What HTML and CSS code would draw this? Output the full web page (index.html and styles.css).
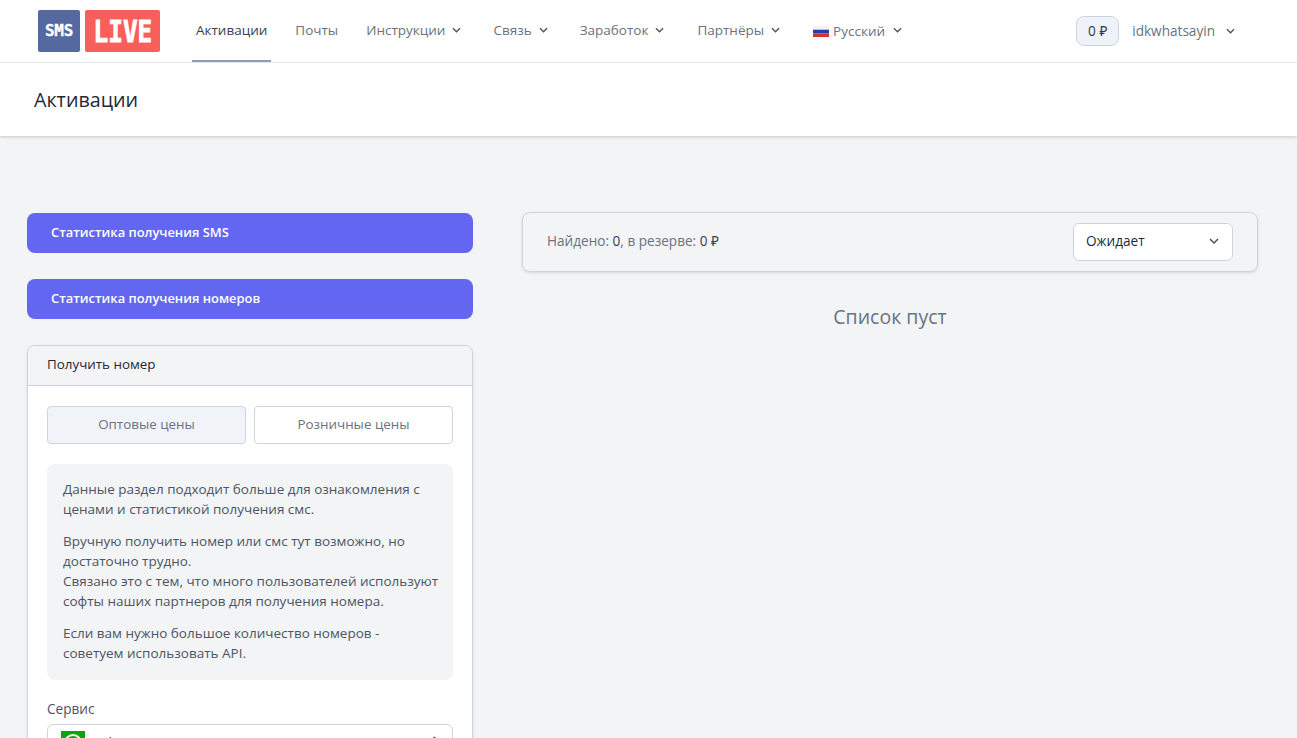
FILE: index.html
```html
<!DOCTYPE html>
<html lang="ru">

<head>
    <meta charset="UTF-8">
    <meta name="viewport" content="width=device-width, initial-scale=1.0">
    <title>SMS LIVE</title>
    <link rel="stylesheet" href="styles.css">
</head>

<body>
    <header class="topbar">
        <a class="logo" href="#">
            <span class="logo-sms"><span>SMS</span></span>
            <span class="logo-live"><span>LIVE</span></span>
        </a>
        <nav class="nav">
            <a class="nav-link plain active" href="#">Активации</a>
            <a class="nav-link plain" href="#">Почты</a>
            <a class="nav-link" href="#">Инструкции
                <svg class="chev" viewBox="0 0 10 6"><path d="M1 1l4 4 4-4"/></svg></a>
            <a class="nav-link" href="#">Связь
                <svg class="chev" viewBox="0 0 10 6"><path d="M1 1l4 4 4-4"/></svg></a>
            <a class="nav-link wide" href="#">Заработок
                <svg class="chev" viewBox="0 0 10 6"><path d="M1 1l4 4 4-4"/></svg></a>
            <a class="nav-link wide" href="#">Партнёры
                <svg class="chev" viewBox="0 0 10 6"><path d="M1 1l4 4 4-4"/></svg></a>
            <a class="nav-link lang" href="#">
                <svg class="flag" viewBox="0 0 16 11"><rect width="16" height="3.7" fill="#f4f4f6"/><rect y="3.7" width="16" height="3.6" fill="#1c3fb0"/><rect y="7.3" width="16" height="3.7" fill="#d9302c"/></svg>
                <span class="lang-name">Русский</span>
                <svg class="chev" viewBox="0 0 10 6"><path d="M1 1l4 4 4-4"/></svg></a>
        </nav>
        <div class="account">
            <span class="balance">0 ₽</span>
            <a class="user" href="#">idkwhatsayin
                <svg class="chev" viewBox="0 0 10 6"><path d="M1 1l4 4 4-4"/></svg></a>
        </div>
    </header>

    <div class="page-title">
        <h1>Активации</h1>
    </div>

    <main class="content">
        <aside class="side">
            <button class="stat-btn">Статистика получения SMS</button>
            <button class="stat-btn">Статистика получения номеров</button>

            <section class="card">
                <div class="card-head">Получить номер</div>
                <div class="card-body">
                    <div class="tabs">
                        <button class="tab selected">Оптовые цены</button>
                        <button class="tab">Розничные цены</button>
                    </div>
                    <div class="notice">
                        <p>Данные раздел подходит больше для ознакомления с ценами и статистикой получения смс.</p>
                        <p>Вручную получить номер или смс тут возможно, но достаточно трудно.<br>Связано это с тем, что много пользователей используют софты наших партнеров для получения номера.</p>
                        <p>Если вам нужно большое количество номеров - советуем использовать API.</p>
                    </div>
                    <label class="field-label">Сервис</label>
                    <div class="service-select">
                        <span class="service-icon">
                            <svg viewBox="0 0 24 24"><circle cx="12" cy="12" r="8" fill="none" stroke="#fff" stroke-width="2"/></svg>
                        </span>
                        <span class="service-name">Whatsapp</span>
                        <svg class="updown" viewBox="0 0 10 6"><path d="M1 5l4-4 4 4"/></svg>
                    </div>
                </div>
            </section>
        </aside>

        <section class="orders">
            <div class="orders-bar">
                <span class="orders-count">Найдено: <b>0</b>, в резерве: <b>0 ₽</b></span>
                <div class="status-select">Ожидает
                    <svg class="chev" viewBox="0 0 10 6"><path d="M1 1l4 4 4-4"/></svg>
                </div>
            </div>
            <p class="empty">Список пуст</p>
        </section>
    </main>
</body>

</html>
```

FILE: styles.css
```css
* {
    margin: 0;
    padding: 0;
    box-sizing: border-box;
}

html,
body {
    height: 100%;
    overflow: hidden;
}

body {
    font-family: 'Open Sans', 'Noto Sans', sans-serif;
    font-size: 13.6px;
    line-height: 20px;
    background: #f3f4f6;
    color: #4a5568;
}

a {
    color: inherit;
    text-decoration: none;
}

button {
    font: inherit;
    cursor: pointer;
}

.chev {
    width: 9px;
    height: 6px;
    fill: none;
    stroke: #4a5568;
    stroke-width: 1.5;
}

/* Шапка */
.topbar {
    height: 63px;
    background: white;
    border-bottom: 1px solid #edf0f3;
    display: flex;
    align-items: center;
    padding-left: 38px;
}

.logo {
    display: flex;
    gap: 5px;
    margin-right: 32px;
}

.logo-sms,
.logo-live {
    height: 42px;
    border-radius: 2px;
    color: white;
    font-family: 'DejaVu Sans Mono', monospace;
    font-weight: 700;
    display: flex;
    align-items: center;
    justify-content: center;
}

.logo-sms {
    width: 42px;
    background: #54699f;
    font-size: 16px;
    letter-spacing: -0.3px;
    -webkit-text-stroke: 0.3px white;
}

.logo-live {
    width: 75px;
    background: #f85e5a;
    font-size: 29px;
    -webkit-text-stroke: 0.8px white;
}

.logo-live span {
    transform: scale(0.84, 1.05);
}

.nav {
    display: flex;
    height: 62px;
    font-size: 13.5px;
}

.nav-link {
    display: flex;
    align-items: center;
    gap: 7px;
    padding: 0 4px;
    margin-right: 24px;
    border-bottom: 2px solid transparent;
    color: #6b7280;
    white-space: nowrap;
}

.nav-link.plain {
    margin-right: 20px;
}

.nav-link.wide {
    margin-right: 25px;
}

.nav-link.active {
    color: #374151;
    border-bottom-color: #8e9dbc;
}

.lang {
    margin-right: 0;
    gap: 4px;
}

.lang .chev {
    margin-left: 4px;
}

.lang-name {
    margin-top: 2px;
}

.flag {
    width: 16px;
    height: 11px;
    margin-top: 2px;
}

.account {
    margin-left: auto;
    margin-right: 62px;
    display: flex;
    align-items: center;
    gap: 13px;
}

.balance {
    height: 30px;
    width: 43px;
    background: #eff3f9;
    border: 1px solid #cbd5e0;
    border-radius: 8px;
    color: #2d3748;
    display: flex;
    align-items: center;
    justify-content: center;
}

.user {
    display: flex;
    align-items: center;
    gap: 11px;
    color: #6b7280;
}

/* Заголовок страницы */
.page-title {
    height: 73px;
    background: white;
    box-shadow: 0 1px 3px rgba(0, 0, 0, 0.18);
    padding: 24px 34px 0;
}

h1 {
    font-size: 19.7px;
    font-weight: 400;
    line-height: 25px;
    color: #1f2937;
}

/* Контент */
.content {
    display: grid;
    grid-template-columns: 446px 736px;
    gap: 49px;
    padding: 77px 27px 0;
}

.side {
    display: flex;
    flex-direction: column;
    gap: 26px;
}

.stat-btn {
    height: 40px;
    border: none;
    border-radius: 8px;
    background: #6366f1;
    color: white;
    font-size: 12.9px;
    font-weight: 600;
    text-align: left;
    padding: 0 24px 2px;
}

.card {
    background: white;
    border: 1px solid #cbd5e0;
    border-radius: 8px;
    box-shadow: 0 1px 3px rgba(0, 0, 0, 0.1);
    overflow: hidden;
}

.card-head {
    height: 40px;
    background: #f3f4f6;
    border-bottom: 1px solid #cbd5e0;
    color: #1f2937;
    font-size: 13.4px;
    padding: 8px 19px;
}

.card-body {
    padding: 20px 19px;
}

.tabs {
    display: grid;
    grid-template-columns: 1fr 1fr;
    gap: 8px;
    margin-bottom: 20px;
}

.tab {
    height: 38px;
    background: white;
    border: 1px solid #cbd5e0;
    border-radius: 4px;
    color: #6b7280;
    font-size: 13.4px;
    padding-bottom: 2px;
}

.tab.selected {
    background: #f0f3f8;
}

.notice {
    background: #f3f4f6;
    border-radius: 8px;
    padding: 15px 12px 17px 16px;
    color: #4b5563;
    font-size: 13.5px;
    margin-bottom: 19px;
}

.notice p+p {
    margin-top: 12px;
}

.field-label {
    display: block;
    margin-bottom: 5px;
}

.service-select {
    height: 38px;
    border: 1px solid #cbd5e0;
    border-radius: 6px;
    padding: 6px 13px;
    display: flex;
    gap: 11px;
    color: #374151;
}

.service-icon {
    width: 24px;
    height: 24px;
    background: #0aa50a;
}

.service-icon svg {
    display: block;
}

.service-name {
    flex: 1;
    padding-top: 2px;
}

.updown {
    width: 9px;
    height: 6px;
    margin: 5px 0 0;
    fill: none;
    stroke: #6b7280;
    stroke-width: 1.5;
}

.orders-bar {
    height: 60px;
    margin-top: -1px;
    border: 1px solid #cbd5e0;
    border-radius: 8px;
    box-shadow: 0 1px 3px rgba(0, 0, 0, 0.12);
    display: flex;
    align-items: center;
    justify-content: space-between;
    padding: 0 24px;
}

.orders-count {
    color: #6b7280;
    padding-bottom: 2px;
}

.orders-count b {
    font-weight: 400;
    color: #374151;
}

.status-select {
    width: 160px;
    height: 38px;
    background: white;
    border: 1px solid #cbd5e0;
    border-radius: 6px;
    display: flex;
    align-items: center;
    justify-content: space-between;
    padding: 0 13px 2px 12px;
    color: #1f2937;
}

.status-select .chev {
    width: 10px;
}

.empty {
    text-align: center;
    font-size: 19.5px;
    line-height: 28px;
    margin-top: 31px;
    color: #6b7280;
}
```
